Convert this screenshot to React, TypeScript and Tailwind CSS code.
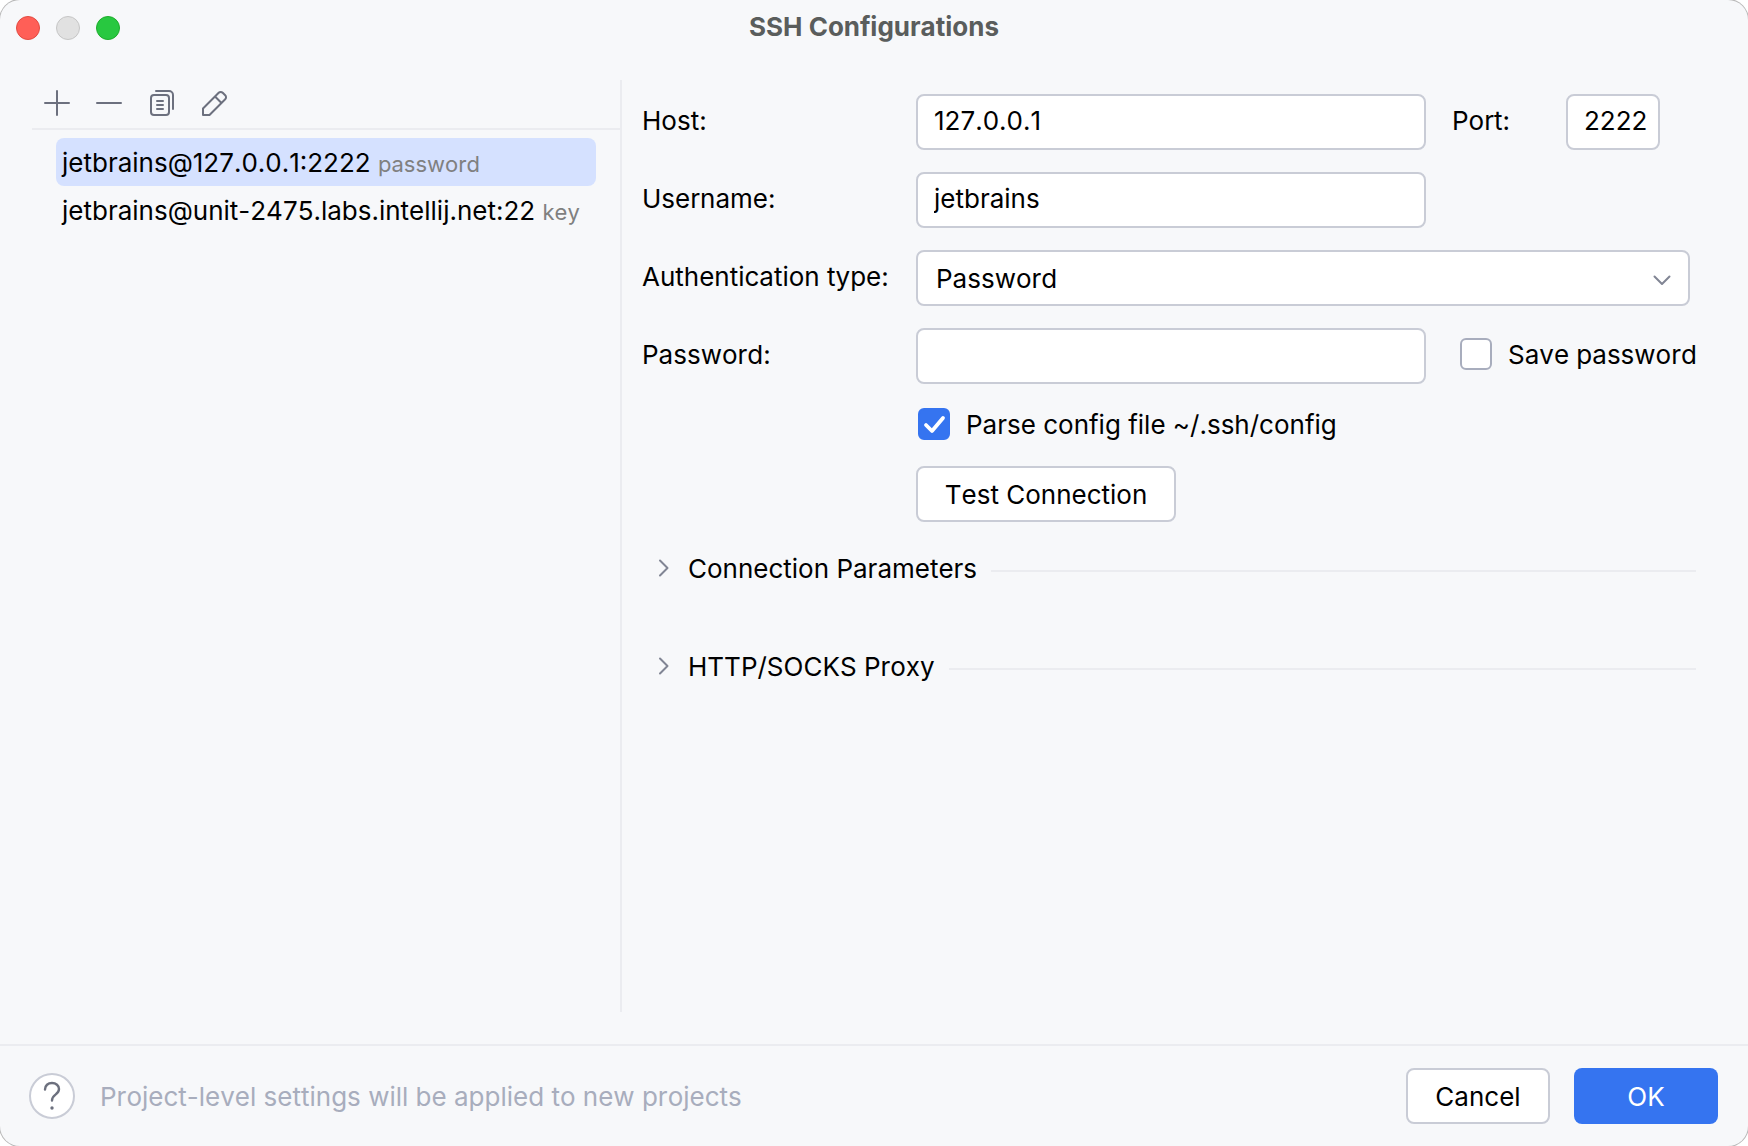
import type { ReactNode } from "react";

const field =
  "h-14 w-full min-w-0 rounded-lg border-2 border-[#c9ccd6] bg-white pl-4 pr-1 pb-1 text-black outline-none";
const button = "h-14 rounded-lg pt-0.5";

function ToolButton({ label, children }: { label: string; children: ReactNode }) {
  return (
    <button type="button" aria-label={label} className="size-8">
      <svg viewBox="0 0 32 32" className="size-8" fill="none" stroke="#6c707e" strokeWidth="2" strokeLinecap="round">
        {children}
      </svg>
    </button>
  );
}

function Label({ id, children }: { id: string; children: ReactNode }) {
  return (
    <label htmlFor={id} className="col-start-1 pb-0.5">
      {children}
    </label>
  );
}

function CheckBox({ id, label, checked }: { id: string; label: string; checked?: boolean }) {
  return (
    <div className="flex items-center gap-4">
      <span className="grid size-8 shrink-0">
        <input
          id={id}
          type="checkbox"
          defaultChecked={checked}
          className="peer col-start-1 row-start-1 size-8 appearance-none rounded-md border-2 border-[#a8adbd] bg-white checked:border-[#3574f0] checked:bg-[#3574f0]"
        />
        <svg
          viewBox="0 0 32 32"
          fill="none"
          stroke="white"
          strokeWidth="3.8"
          strokeLinecap="round"
          strokeLinejoin="round"
          className="pointer-events-none invisible col-start-1 row-start-1 size-8 peer-checked:visible"
        >
          <path d="M8 17 14 23 25 10" />
        </svg>
      </span>
      <label htmlFor={id} className="pt-0.5 leading-[30px] whitespace-nowrap">
        {label}
      </label>
    </div>
  );
}

function Section({ title }: { title: string }) {
  return (
    <div className="flex items-center gap-3.5">
      <button type="button" aria-expanded="false" className="flex items-center gap-2">
        <svg viewBox="0 0 32 32" className="size-8" fill="none" stroke="#818594" strokeWidth="2" strokeLinecap="round" strokeLinejoin="round">
          <path d="M12 8.500 19.500 16 12 23.500" />
        </svg>
        <span className="pt-0.5 leading-[30px]">{title}</span>
      </button>
      <span className="mt-1.5 h-0.5 flex-1 bg-[#ebecf0]" />
    </div>
  );
}

function Connection({ name, auth, selected }: { name: string; auth: string; selected?: boolean }) {
  return (
    <li
      role="option"
      aria-selected={!!selected}
      className="flex h-12 items-center rounded-lg px-1.5 pt-0.5 whitespace-pre aria-selected:bg-[#d5e1ff]"
    >
      <span>
        {name} <span className="text-[22px] text-[#808080]">{auth}</span>
      </span>
    </li>
  );
}

export default function App() {
  return (
    <div className="min-h-screen bg-white">
      <main className="flex min-h-screen flex-col rounded-[20px] bg-[#f7f8fa] font-['Inter',sans-serif] text-[26px] leading-8 text-black shadow-[0_0_0_1px_#b8b8b8] [font-kerning:none]">
        <header className="grid h-14 grid-cols-[1fr_auto_1fr] items-center px-4">
          <div className="flex gap-4">
            <button type="button" aria-label="Close" className="size-6 rounded-full border border-[#e24b41] bg-[#ff5f57]" />
            <button type="button" aria-label="Minimize" className="size-6 rounded-full border border-[#c6c6c6] bg-[#e1e1e1]" />
            <button type="button" aria-label="Zoom" className="size-6 rounded-full border border-[#1dad2b] bg-[#28c840]" />
          </div>
          <h1 className="pb-0.5 font-bold text-[#5a5d5c]">SSH Configurations</h1>
        </header>

        <div className="mt-6 mb-8 flex flex-1">
          <aside className="w-[622px] shrink-0 border-r-2 border-[#ebecf0] pl-8">
            <div role="toolbar" className="flex h-[50px] items-center gap-5 border-b-2 border-[#ebecf0] pb-0.5 pl-[9px]">
              <ToolButton label="Add">
                <path d="M16 4v24M4 16h24" />
              </ToolButton>
              <ToolButton label="Remove">
                <path d="M4 16h24" />
              </ToolButton>
              <ToolButton label="Copy">
                <rect x="6" y="8" width="18" height="20" rx="3" />
                <path d="M11 4h13a4 4 0 0 1 4 4v14M12 14h6M12 18h6M12 22h6" />
              </ToolButton>
              <ToolButton label="Edit">
                <path strokeLinejoin="round" d="M6 28v-6.500L21.700 5.800a2.800 2.800 0 0 1 4 0l2.500 2.500a2.800 2.800 0 0 1 0 4L12.500 28zM18 9.500l6.500 6.500" />
              </ToolButton>
            </div>
            <ul role="listbox" aria-label="SSH configurations" className="mt-2 mr-6 ml-6">
              <Connection name="jetbrains@127.0.0.1:2222" auth="password" selected />
              <Connection name="jetbrains@unit-2475.labs.intellij.net:22" auth="key" />
            </ul>
          </aside>

          <form className="min-w-0 flex-1 pt-3.5 pr-[52px] pl-5">
            <div className="grid grid-cols-[274px_minmax(0,1fr)_270px] items-center gap-y-[22px]">
              <Label id="host">Host:</Label>
              <input id="host" defaultValue="127.0.0.1" className={field} />
              <div className="grid grid-cols-[114px_94px] items-center pl-[26px]">
                <Label id="port">Port:</Label>
                <input id="port" defaultValue="2222" className={field} />
              </div>

              <Label id="username">Username:</Label>
              <input id="username" defaultValue="jetbrains" className={field} />

              <Label id="auth">Authentication type:</Label>
              <div className="col-span-2 mr-1.5 grid items-center">
                <select
                  id="auth"
                  className="col-start-1 row-start-1 h-14 w-full appearance-none rounded-lg border-2 border-[#c9ccd6] bg-white px-[18px] pt-0.5 outline-none"
                >
                  <option>Password</option>
                </select>
                <svg
                  viewBox="0 0 32 32"
                  fill="none"
                  stroke="#818594"
                  strokeWidth="2"
                  strokeLinecap="round"
                  strokeLinejoin="round"
                  className="pointer-events-none col-start-1 row-start-1 mr-3 size-8 justify-self-end"
                >
                  <path d="M8.500 14.500 16 22 23.500 14.500" />
                </svg>
              </div>

              <Label id="password">Password:</Label>
              <input id="password" type="password" className={field} />
              <div className="pb-1 pl-[34px]">
                <CheckBox id="save" label="Save password" />
              </div>
            </div>

            <div className="flex flex-col items-start gap-[26px] pt-6 pl-[274px]">
              <div className="pl-0.5">
                <CheckBox id="parse" label="Parse config file ~/.ssh/config" checked />
              </div>
              <button type="button" className={button + " w-[260px] border-2 border-[#c9ccd6] bg-white"}>
                Test Connection
              </button>
            </div>

            <div className="flex flex-col gap-[66px] pt-[30px] pl-1.5">
              <Section title="Connection Parameters" />
              <Section title="HTTP/SOCKS Proxy" />
            </div>
          </form>
        </div>

        <footer className="flex items-center border-t-2 border-[#ebecf0] px-[30px] pt-[22px] pb-[22px]">
          <button type="button" aria-label="Help" className="-ml-px size-[46px] shrink-0 rounded-full border-2 border-[#c9ccd6] bg-white">
            <svg viewBox="0 0 42 42" className="size-full" fill="none" stroke="#6c707e" strokeWidth="2.400" strokeLinecap="round">
              <path d="M14 14.500C14 10.500 17 8 21 8s7 2.600 7 6c0 2.800-1.600 4.200-3.500 5.600-2.200 1.600-3.500 2.700-3.500 5.900" />
              <circle cx="21" cy="33" r="1.700" fill="#6c707e" stroke="none" />
            </svg>
          </button>
          <p className="ml-[25px] flex-1 pt-0.5 text-[#a8adbd]">Project-level settings will be applied to new projects</p>
          <div className="flex gap-6">
            <button type="button" className={button + " w-36 border-2 border-[#c9ccd6] bg-white"}>
              Cancel
            </button>
            <button type="button" className={button + " w-36 bg-[#3574f0] text-white"}>
              OK
            </button>
          </div>
        </footer>
      </main>
    </div>
  );
}
